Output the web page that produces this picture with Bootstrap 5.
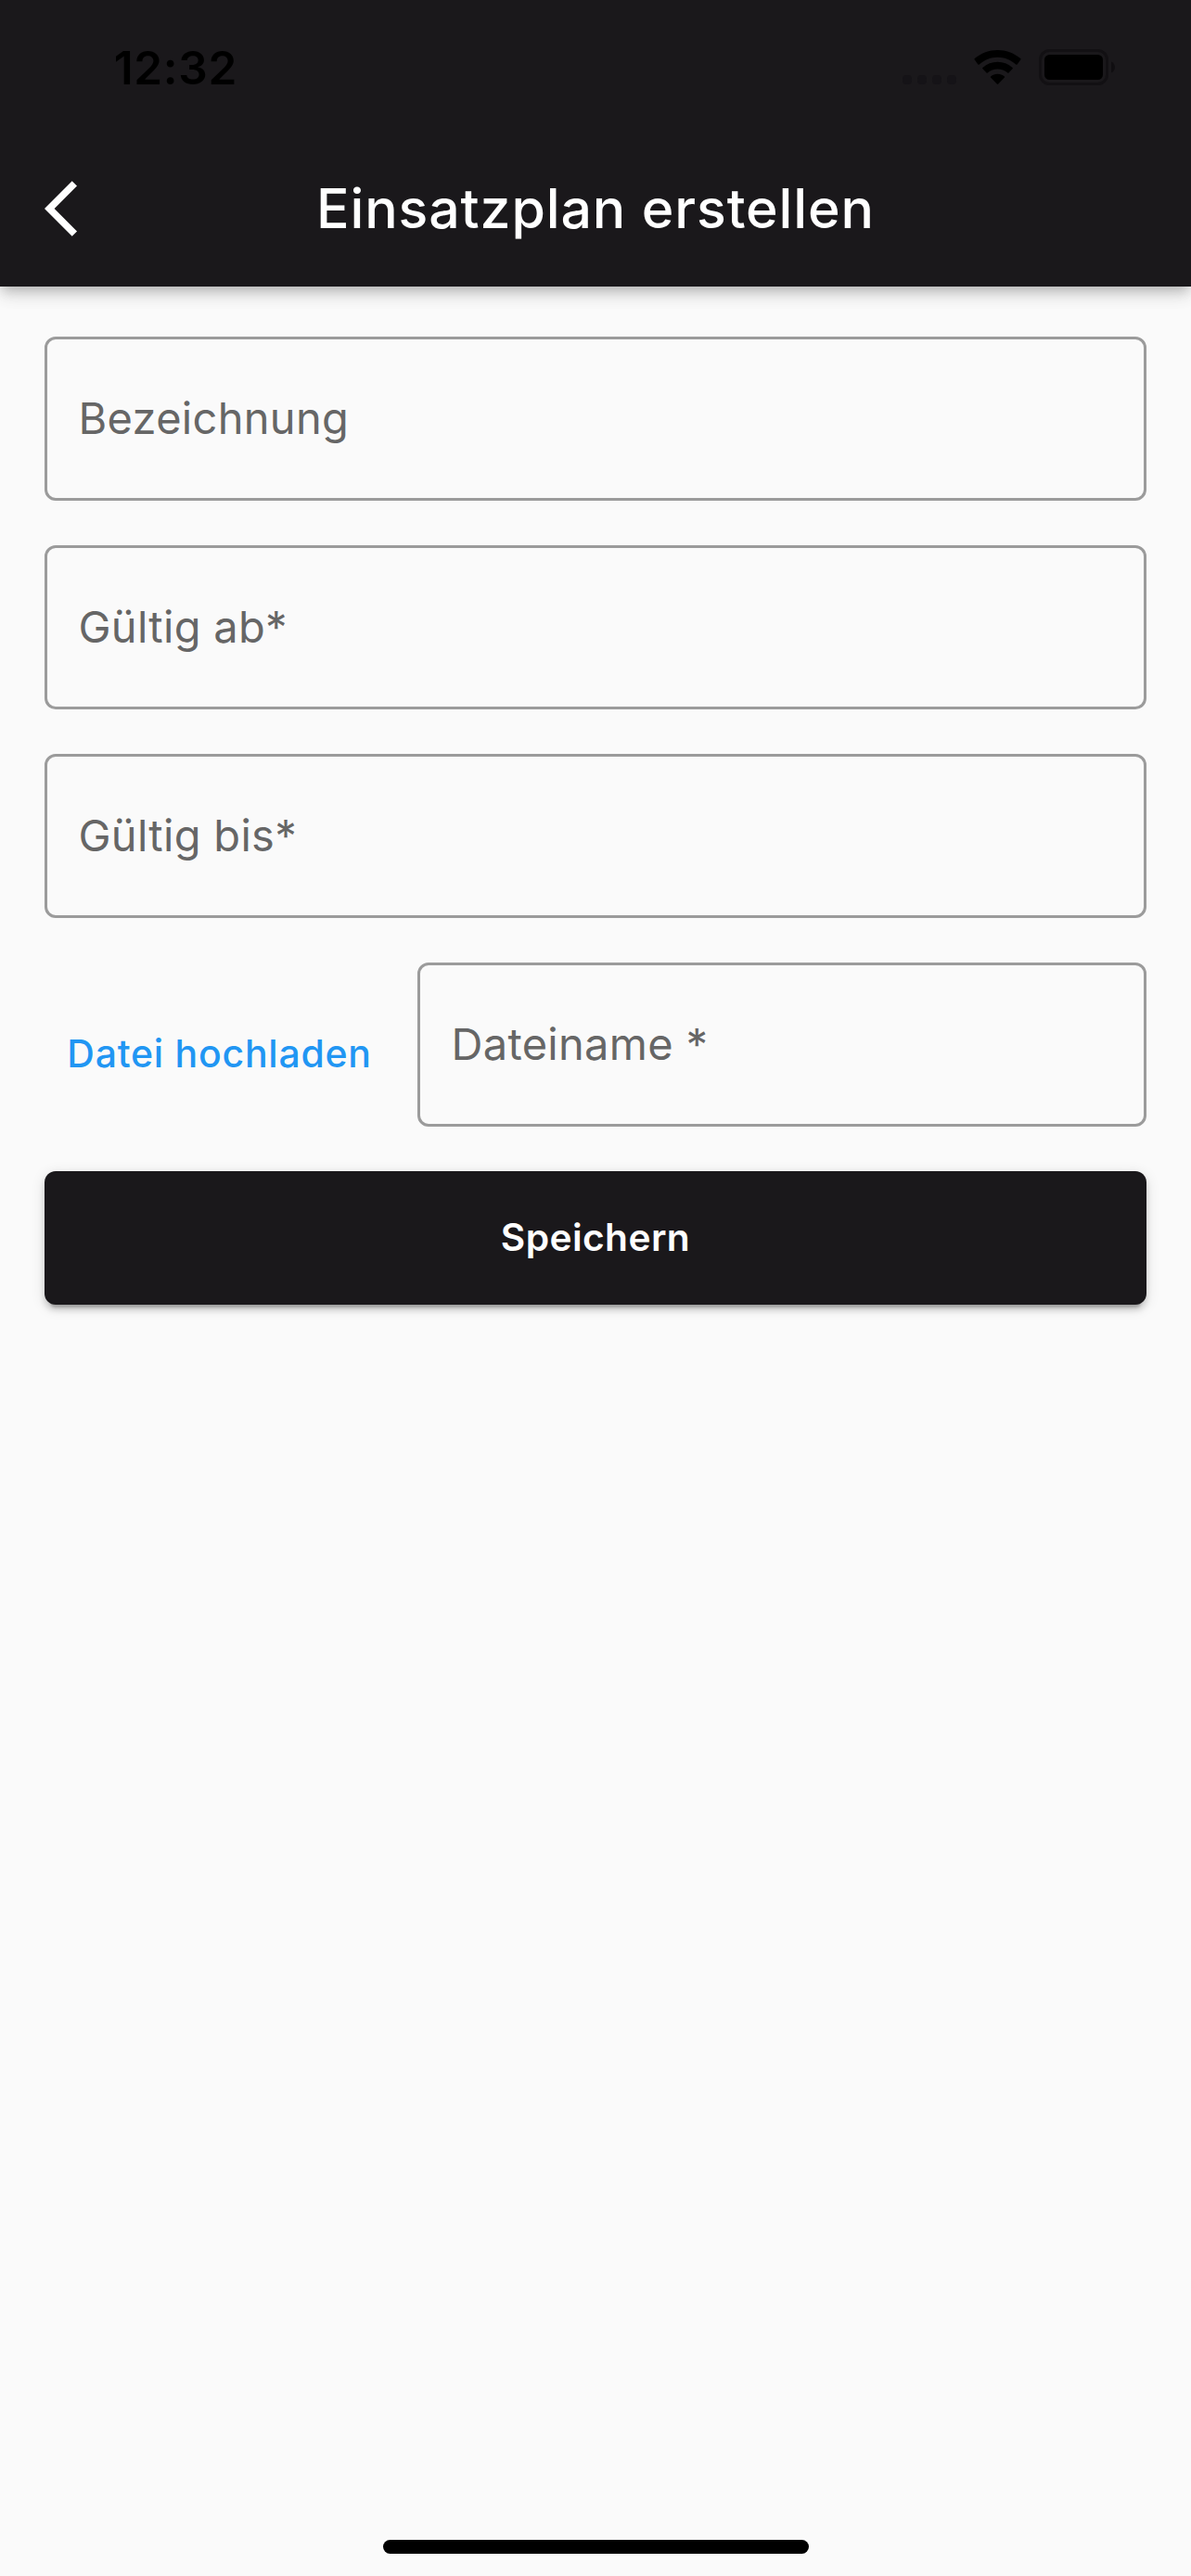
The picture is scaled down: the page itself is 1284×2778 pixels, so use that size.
<!DOCTYPE html>
<html lang="de">
<head>
<meta charset="utf-8">
<meta name="viewport" content="width=device-width, initial-scale=1">
<title>Einsatzplan erstellen</title>
<link href="https://cdn.jsdelivr.net/npm/bootstrap@5.3.0/dist/css/bootstrap.min.css" rel="stylesheet">
<style>
  :root { --ink: #1a181b; --paper: #fafafa; --accent: #2196f3; }
  body { background: var(--paper); font-family: Inter, "Liberation Sans", sans-serif; min-height: 2778px; }
  .app-header { background: var(--ink); height: 309px; box-shadow: 0 6px 12px -3px rgba(0,0,0,.2), 0 12px 15px rgba(0,0,0,.07), 0 3px 24px rgba(0,0,0,.09); }
  .status-bar { height: 132px; padding: 43px 82px 0 122.7px; }
  .clock { font-size: 49.5px; font-weight: 600; line-height: 60px; letter-spacing: .7px; color: #000; }
  .status-icons { width: 232px; height: 60px; }
  .title-bar { height: 177px; display: grid; grid-template-columns: 150px 1fr 150px; padding: 57px 48px 0; }
  .title-bar .btn { width: 72px; height: 72px; line-height: 0; }
  .page-title { font-size: 59px; font-weight: 500; line-height: 72px; letter-spacing: .87px; white-space: nowrap; }
  .plan-form { padding: 54px 48px 0; gap: 48px; }
  .plan-form .form-control { height: 177px; padding: 0 33.5px 2px; border: 3px solid #9b9b9b; border-radius: 12px; background: transparent; font-size: 47px; line-height: 56px; letter-spacing: .3px; }
  .plan-form .form-control::placeholder { color: #666; opacity: 1; }
  .upload-cell { width: 402px; padding: 20px 0 0 24.3px; }
  .upload-link { font-size: 41px; font-weight: 500; line-height: 49px; letter-spacing: .75px; color: var(--accent); white-space: nowrap; }
  .save-btn { height: 144px; border-radius: 12px; background: var(--ink); font-size: 40.7px; font-weight: 600; line-height: 49px; letter-spacing: .402px; padding: 47px 0 48px; box-shadow: 0 9px 3px -6px rgba(0,0,0,.2), 0 6px 6px rgba(0,0,0,.14), 0 3px 15px rgba(0,0,0,.12); }
  .home-pill { width: 459px; height: 15px; border-radius: 8px; background: #000; margin-bottom: 24px; }
</style>
</head>
<body class="d-flex flex-column">
<header class="app-header">
  <div class="status-bar d-flex justify-content-between">
    <span class="clock">12:32</span>
    <svg class="status-icons" viewBox="970 43 232 60" aria-hidden="true">
      <g fill="#151317">
        <rect x="973" y="81" width="10" height="10" rx="4"/><rect x="989" y="81" width="10" height="10" rx="4"/>
        <rect x="1005" y="81" width="10" height="10" rx="4"/><rect x="1021" y="81" width="10" height="10" rx="4"/>
      </g>
      <g fill="#000">
        <path d="M1050.6 64.2Q1050.2 63.6 1050.8 63.1C1058 57 1066.5 53.9 1075.5 53.9S1093 57 1100.2 63.1Q1100.8 63.6 1100.4 64.2L1096.6 69.4Q1096 70 1095.3 69.5C1089.5 64.5 1082.7 61.8 1075.5 61.8S1061.5 64.5 1055.7 69.5Q1055 70 1054.4 69.4Z"/>
        <path d="M1059.3 74.1Q1058.8 73.5 1059.4 73C1064 69 1069.6 66.8 1075.5 66.8S1087 69 1091.6 73Q1092.2 73.5 1091.7 74.1L1087.5 78.4Q1086.9 79 1086.3 78.5C1083.2 75.9 1079.5 74.5 1075.5 74.5S1067.8 75.9 1064.7 78.5Q1064.1 79 1063.5 78.4Z"/>
        <path d="M1068 83.5Q1067.5 83 1068.1 82.5C1070.2 80.7 1072.8 79.7 1075.5 79.7S1080.8 80.7 1082.9 82.5Q1083.5 83 1083 83.5L1076.2 90.4Q1075.5 91.1 1074.8 90.4Z"/>
        <rect x="1126" y="59" width="63" height="27" rx="5.5"/>
      </g>
      <rect x="1121.5" y="54.5" width="72" height="36" rx="10" fill="none" stroke="#121013" stroke-width="3"/>
      <path d="M1198 66.5C1203.3 68.5 1203.3 76.5 1198 78.5Z" fill="#100e11"/>
    </svg>
  </div>
  <div class="title-bar">
    <button type="button" class="btn p-0 border-0" aria-label="Zurück">
      <svg width="72" height="72" viewBox="0 0 24 24" fill="#fff"><path d="M11.67 3.87 9.9 2.1 0 12l9.9 9.9 1.77-1.77L3.54 12z"/></svg>
    </button>
    <h1 class="page-title text-white text-center m-0">Einsatzplan erstellen</h1>
  </div>
</header>

<main class="flex-grow-1">
  <form class="plan-form d-flex flex-column">
    <input type="text" class="form-control shadow-none" placeholder="Bezeichnung">
    <input type="text" class="form-control shadow-none" placeholder="Gültig ab*">
    <input type="text" class="form-control shadow-none" placeholder="Gültig bis*">
    <div class="d-flex align-items-center">
      <div class="upload-cell flex-shrink-0">
        <button type="button" class="btn upload-link p-0 border-0">Datei hochladen</button>
      </div>
      <input type="text" class="form-control shadow-none" placeholder="Dateiname *">
    </div>
    <button type="button" class="btn save-btn w-100 border-0 text-white">Speichern</button>
  </form>
</main>

<footer class="d-flex justify-content-center">
  <div class="home-pill"></div>
</footer>
<script src="https://cdn.jsdelivr.net/npm/bootstrap@5.3.0/dist/js/bootstrap.bundle.min.js"></script>
</body>
</html>
